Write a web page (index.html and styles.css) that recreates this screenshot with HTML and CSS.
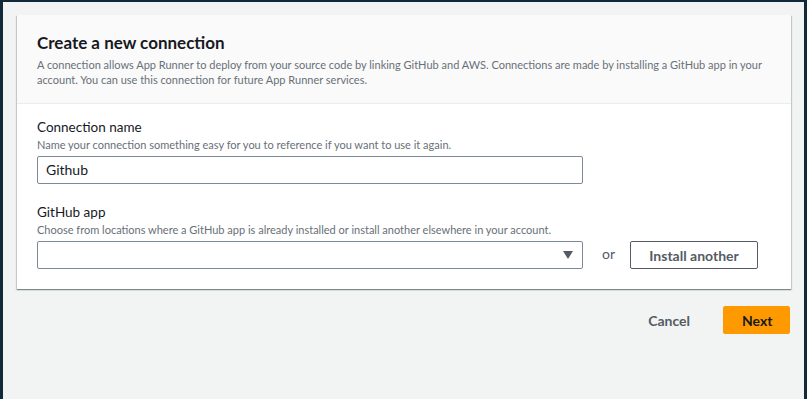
FILE: index.html
```
<html>

<head>
    <link rel="stylesheet" href="styles.css">
</head>

<body>
    <div class="frame">
        <div class="card">
            <section class="card__header">
                <h2>Create a new connection</h2>
                <p class="hint">A connection allows App Runner to deploy from your source code by linking GitHub and AWS. Connections are made by installing a GitHub app in your account. You can use this connection for future App Runner services.</p>
            </section>
            <section class="card__body">
                <div class="field">
                    <label>Connection name</label>
                    <p class="hint">Name your connection something easy for you to reference if you want to use it again.</p>
                    <div class="input">Github</div>
                </div>
                <div class="field">
                    <label>GitHub app</label>
                    <p class="hint">Choose from locations where a GitHub app is already installed or install another elsewhere in your account.</p>
                    <div class="select__row">
                        <div class="input select">
                            <svg width="10" height="8" viewBox="0 0 10 8"><path d="M0 0h10L5 8z" fill="#545b64"/></svg>
                        </div>
                        <span class="or">or</span>
                        <button class="btn">Install another</button>
                    </div>
                </div>
            </section>
        </div>
        <div class="actions">
            <button class="btn btn--link">Cancel</button>
            <button class="btn btn--primary">Next</button>
        </div>
    </div>
</body>

</html>
```

FILE: styles.css
```
body {
    margin: 0;
    padding: 0;
    font-family: Lato, Arial, sans-serif;
    color: #16191f;
}

div.frame {
    box-sizing: border-box;
    height: 399px;
    background-color: #f2f3f3;
    border-left: 3px solid #12293a;
    border-top: 2px solid #12293a;
    border-right: 3px solid #12293a;
    padding: 13px 13px 0 14px;
}

div.card {
    background-color: #fff;
    box-shadow: 0 1px 1px 0 rgba(0, 28, 36, .3), 1px 1px 1px 0 rgba(0, 28, 36, .15), -1px 1px 1px 0 rgba(0, 28, 36, .15);
}

section.card__header {
    background-color: #fafafa;
    border-bottom: 1px solid #eaeded;
    padding: 17px 20px 16px 20px;
}

h2 {
    margin: 0 0 3px 0;
    font-size: 17px;
    line-height: 22px;
    font-weight: 700;
}

p.hint {
    margin: 0;
    font-size: 11px;
    line-height: 15px;
    color: #687078;
}

section.card__body {
    padding: 13px 20px 20px 20px;
}

div.field + div.field {
    margin-top: 18px;
}

label {
    display: block;
    font-size: 13.5px;
    line-height: 20px;
}

div.field p.hint {
    line-height: 16px;
    margin-bottom: 3px;
}

div.input {
    box-sizing: border-box;
    width: 546px;
    height: 28px;
    border: 1px solid #7d8998;
    border-radius: 2px;
    padding: 0 8px;
    font-size: 14px;
    line-height: 26px;
    background-color: #fff;
}

div.select__row {
    display: flex;
    align-items: center;
}

div.select {
    display: flex;
    justify-content: flex-end;
    align-items: center;
    padding-right: 9px;
}

span.or {
    margin: 0 15px 4px 19px;
    font-size: 14px;
    color: #545b64;
}

button.btn {
    box-sizing: border-box;
    height: 28px;
    padding: 0 18px;
    border: 1px solid #545b64;
    border-radius: 2px;
    background-color: #fff;
    color: #545b64;
    font-family: Lato, Arial, sans-serif;
    font-size: 14px;
    font-weight: 700;
    white-space: nowrap;
    width: 128px;
}

div.actions {
    display: flex;
    justify-content: flex-end;
    align-items: center;
    margin-top: 17px;
    margin-right: 1px;
}

button.btn--link {
    border-color: transparent;
    background-color: transparent;
    width: auto;
    margin-right: 14px;
}

button.btn--primary {
    width: 67px;
    border-color: #ff9900;
    background-color: #ff9900;
    color: #16191f;
}
```
